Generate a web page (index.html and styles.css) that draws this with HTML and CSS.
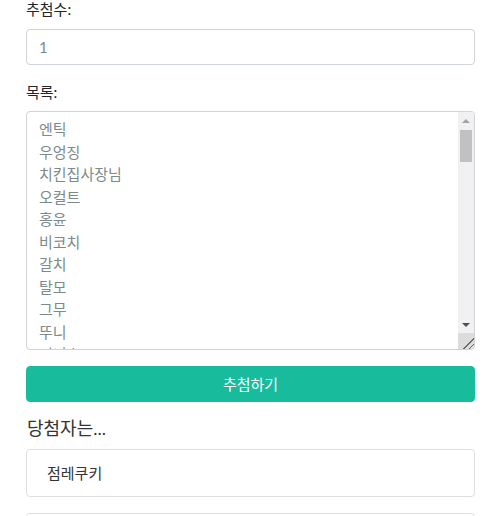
FILE: index.html
```html
<!DOCTYPE html>
<html lang="ko">
<head>
<meta charset="utf-8">
<title>추첨</title>
<link rel="stylesheet" href="styles.css">
</head>
<body>
<main class="container">
  <div class="field">
    <label class="form-label" for="count">추첨수:</label>
    <input class="form-control" id="count" type="text" value="1">
  </div>
  <div class="field">
    <label class="form-label" for="list">목록:</label>
    <div class="list-wrap">
      <textarea class="form-control list" id="list">엔틱
우엉징
치킨집사장님
오컬트
홍윤
비코치
갈치
탈모
그무
뚜니
퍼니호
점레쿠키
하늘
바다
구름
별빛
달님
햇살
나무
꽃잎
바람
소나기
무지개
노을
새벽
이슬
단풍
눈송이
파도
모래
조개
고래
돌고래
거북이
토끼
여우
늑대
사슴
곰돌이
다람쥐
참새
까치
부엉이
고양이
강아지
햄스터
오리
병아리
펭귄
코알라
판다
사자
호랑이
기린
하마
악어
두더지
너구리
수달
해달
물개
상어
문어
오징어
새우</textarea>
      <div class="scrollbar" aria-hidden="true">
        <div class="sb-btn"><span class="arrow-up"></span></div>
        <div class="sb-track"><div class="sb-thumb"></div></div>
        <div class="sb-btn"><span class="arrow-down"></span></div>
        <div class="sb-resizer"></div>
      </div>
    </div>
  </div>
  <button class="btn" type="button">추첨하기</button>
  <h5 class="result-title">당첨자는...</h5>
  <div class="result">점레쿠키</div>
  <div class="result">우엉징</div>
</main>
</body>
</html>
```
FILE: styles.css
```css
* { box-sizing: border-box; }
html, body { margin: 0; padding: 0; background: #fff; }
body {
  font-family: Lato, "Noto Sans CJK KR", sans-serif;
  font-size: 15px;
  line-height: 1.5;
  color: #212529;
}
.container {
  padding: 0 20px 0 26px;
  margin-top: -2px;
}
.field { margin-bottom: 16px; }
.form-label {
  display: block;
  margin-bottom: 8px;
}
.form-control {
  display: block;
  width: 100%;
  font: inherit;
  color: #7b8a8b;
  padding: 6px 12px;
  border: 1px solid #ced4da;
  border-radius: 4px;
  background: #fff;
  height: 36px;
}
.list-wrap {
  position: relative;
}
.list {
  height: 239px;
  resize: none;
  padding: 6px 28px 6px 12px;
  overflow: hidden;
}
.scrollbar {
  position: absolute;
  top: 1px;
  right: 1px;
  bottom: 1px;
  width: 16px;
  display: flex;
  flex-direction: column;
  background: #f1f1f1;
  border-radius: 0 3px 3px 0;
  overflow: hidden;
}
.sb-btn {
  height: 17px;
  flex: none;
  display: flex;
  align-items: center;
  justify-content: center;
}
.arrow-up {
  width: 0;
  height: 0;
  border-left: 4px solid transparent;
  border-right: 4px solid transparent;
  border-bottom: 4px solid #a3a3a3;
}
.arrow-down {
  width: 0;
  height: 0;
  border-left: 4px solid transparent;
  border-right: 4px solid transparent;
  border-top: 4px solid #505050;
}
.sb-track {
  flex: 1;
  padding: 1px 2px 0;
}
.sb-thumb {
  height: 32px;
  background: #c1c1c1;
}
.sb-resizer {
  height: 16px;
  flex: none;
  background-color: #dcdcdc;
  background-image:
    linear-gradient(135deg, transparent 64%, #6a6a6a 64%, #6a6a6a 69%, transparent 69%, transparent 82%, #6a6a6a 82%, #6a6a6a 87%, transparent 87%);
}
.btn {
  display: block;
  width: 100%;
  height: 36px;
  font: inherit;
  color: #fff;
  background: #18bc9c;
  border: 1px solid #18bc9c;
  border-radius: 4px;
  padding: 6px 12px;
  cursor: pointer;
}
.result-title {
  font-size: 18px;
  font-weight: 400;
  line-height: 1.2;
  margin: 16px 0 9px 1px;
  color: #333;
}
.result {
  border: 1px solid #dfdfdf;
  border-radius: 4px;
  padding: 12px 20px;
  margin-bottom: 16px;
  color: #333;
}
```
